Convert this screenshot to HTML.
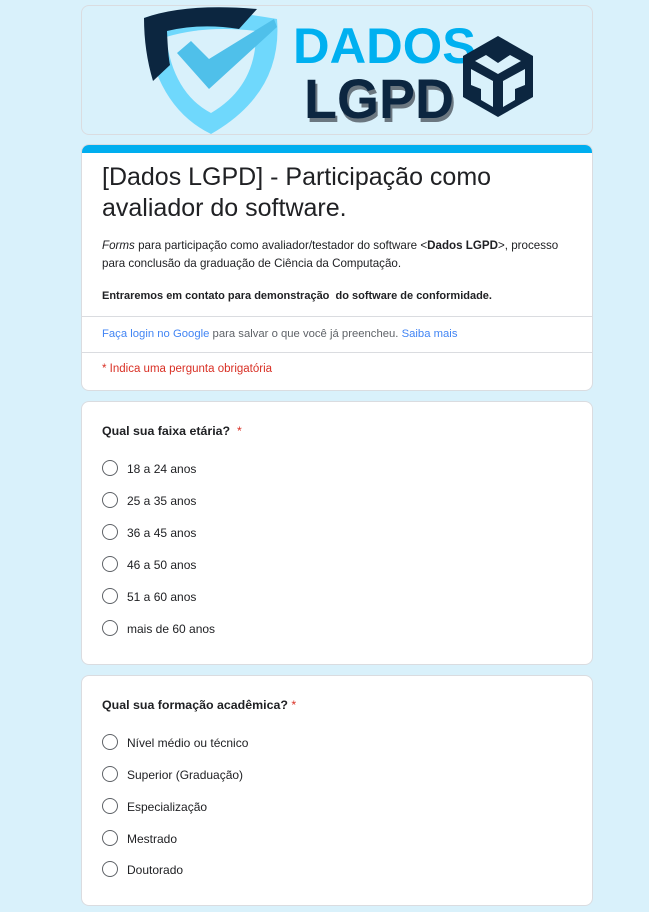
<!DOCTYPE html>
<html><head><meta charset="utf-8"><style>
body{margin:0;background:#d9f1fb;font-family:"Liberation Sans",Arial,sans-serif;color:#202124;width:649px;height:912px;overflow:hidden;position:relative}
.card{position:absolute;left:81px;width:510px;background:#fff;border:1px solid #dadce0;border-radius:8px}
.opt{position:absolute;left:20px;font-size:12px;color:#202124}
.opt i{position:absolute;left:0;top:-2px;width:14px;height:14px;border:1.5px solid #5f6368;border-radius:50%}
.opt span{position:absolute;left:25px;top:0;white-space:nowrap}
.q{position:absolute;left:20px;font-size:12.4px;font-weight:bold}
.q b{color:#d93025;font-weight:normal}
</style></head><body>
<div class="card" style="top:5px;height:128px;background:#d9f1fb;overflow:hidden">
<svg width="510" height="128" viewBox="81 5 510 128" style="position:absolute;left:0;top:0">
<path d="M143 17 Q185 2 276 18 Q282 92 210 133 Q152 105 143 17 Z" fill="#6fd8fc"/>
<path d="M165 36 Q205 24 255 30 Q256 85 210 112 Q172 92 165 36 Z" fill="#d9f1fb"/>
<path d="M143 17 Q185 2 256 8 L238 28 Q200 22 166 30 Q167 55 169 64 L152 80 Q143 50 143 17Z" fill="#0c2640"/>
<path d="M176 52 L190 40 L208 58 L273 18 L276 26 L208 88 Z" fill="#4fc0ea"/>
<text x="305" y="121" font-family="Liberation Sans" font-weight="bold" font-size="56" fill="#6b7780" textLength="150" lengthAdjust="spacingAndGlyphs">LGPD</text>
<text x="292" y="62" font-family="Liberation Sans" font-weight="bold" font-size="50" fill="#00b0f0" textLength="183" lengthAdjust="spacingAndGlyphs">DADOS</text>
<text x="303" y="117" font-family="Liberation Sans" font-weight="bold" font-size="56" fill="#0c2640" textLength="150" lengthAdjust="spacingAndGlyphs">LGPD</text>
<path d="M497 35 L532 55 L532 96 L497 116 L462 96 L462 55 Z" fill="#0c2640"/>
<path d="M474 60 L497 73 L520 60 L509 54 L497 62 L485 54 Z M470 68 L492 80 L492 106 L480 99 L480 88 L470 84Z M524 68 L502 80 L502 106 L514 99 L514 88 L524 84Z" fill="#d9f1fb"/>
</svg></div>
<div class="card" style="top:144px;height:245px;overflow:hidden">
<div style="height:8px;background:#00aeef"></div>
<div style="position:absolute;left:20px;top:17px;font-size:25px;line-height:31px;width:480px">[Dados LGPD] - Participação como avaliador do software.</div>
<div style="position:absolute;left:20px;top:92px;font-size:11.6px;line-height:18px;width:480px"><i>Forms</i> para participação como avaliador/testador do software &lt;<b>Dados LGPD</b>&gt;, processo para conclusão da graduação de Ciência da Computação.</div>
<div style="position:absolute;left:20px;top:145px;font-size:11px;font-weight:bold">Entraremos em contato para demonstração&nbsp; do software de conformidade.</div>
<div style="position:absolute;left:0;right:0;top:171px;border-top:1px solid #dadce0"></div>
<div style="position:absolute;left:20px;top:183px;font-size:11.3px;color:#5f6368"><span style="color:#4285f4">Faça login no Google</span> para salvar o que você já preencheu. <span style="color:#4285f4">Saiba mais</span></div>
<div style="position:absolute;left:0;right:0;top:207px;border-top:1px solid #dadce0"></div>
<div style="position:absolute;left:20px;top:218px;font-size:11.5px;color:#d93025">* Indica uma pergunta obrigatória</div>
</div>
<div class="card" style="top:401px;height:262px">
<div class="q" style="top:22px">Qual sua faixa etária? &nbsp;<b>*</b></div>
<div class="opt" style="top:60px"><i></i><span>18 a 24 anos</span></div>
<div class="opt" style="top:92px"><i></i><span>25 a 35 anos</span></div>
<div class="opt" style="top:124px"><i></i><span>36 a 45 anos</span></div>
<div class="opt" style="top:156px"><i></i><span>46 a 50 anos</span></div>
<div class="opt" style="top:188px"><i></i><span>51 a 60 anos</span></div>
<div class="opt" style="top:220px"><i></i><span>mais de 60 anos</span></div>
</div>
<div class="card" style="top:675px;height:229px">
<div class="q" style="top:22px">Qual sua formação acadêmica? <b>*</b></div>
<div class="opt" style="top:60px"><i></i><span>Nível médio ou técnico</span></div>
<div class="opt" style="top:92px"><i></i><span>Superior (Graduação)</span></div>
<div class="opt" style="top:124px"><i></i><span>Especialização</span></div>
<div class="opt" style="top:156px"><i></i><span>Mestrado</span></div>
<div class="opt" style="top:187px"><i></i><span>Doutorado</span></div>
</div>
</body></html>
